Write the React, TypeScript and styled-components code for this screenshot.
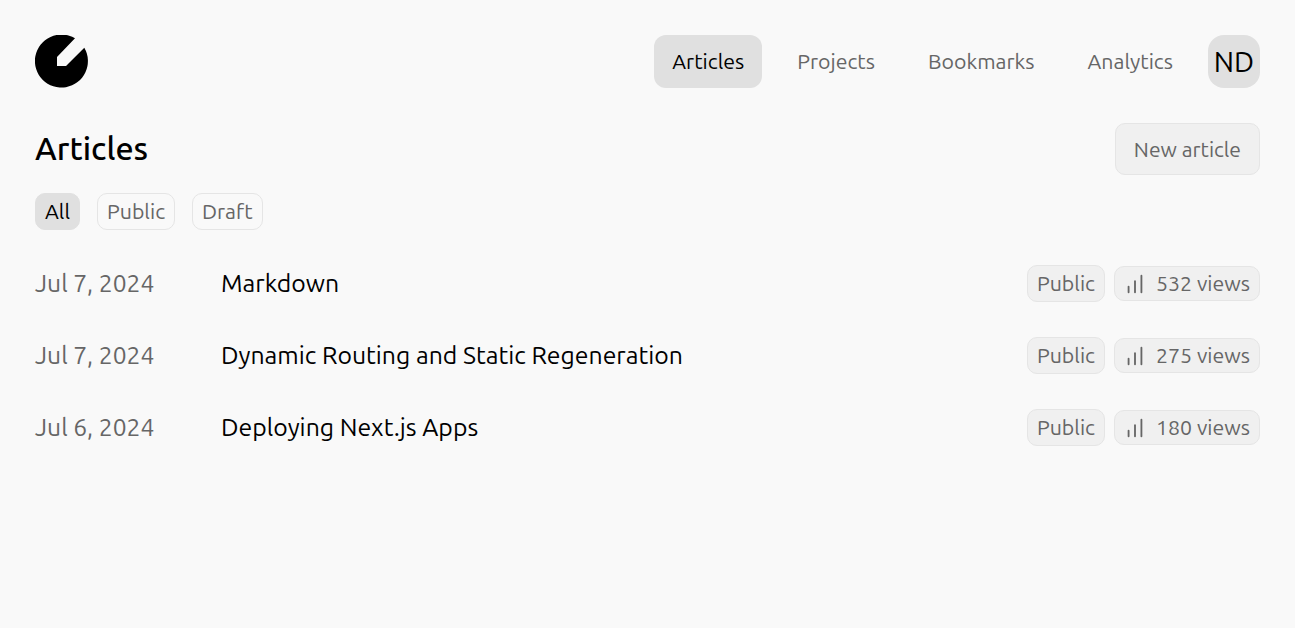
import styled, { createGlobalStyle } from 'styled-components';
import { ChartNoAxesColumnIncreasing } from 'lucide-react';

const GlobalStyle = createGlobalStyle`
  html, body {
    margin: 0;
    background: #f9f9f9;
    color: #000;
    font-family: Ubuntu, "Noto Sans", sans-serif;
  }
  * {
    box-sizing: border-box;
  }
`;

const Page = styled.div`
  padding: 35px;
`;

const Header = styled.header`
  display: flex;
  align-items: center;
  justify-content: space-between;
  height: 53px;
`;

const Nav = styled.nav`
  display: flex;
  align-items: center;
  gap: 17px;
`;

const NavItem = styled.a<{ $active?: boolean }>`
  display: flex;
  align-items: center;
  height: 53px;
  padding: 0 18px 2px;
  border-radius: 12px;
  font-size: 21.3px;
  color: ${(p) => (p.$active ? '#000' : '#666')};
  background: ${(p) => (p.$active ? '#e0e0e0' : 'transparent')};
`;

const Avatar = styled.div`
  display: flex;
  align-items: center;
  justify-content: center;
  width: 52px;
  height: 53px;
  border-radius: 16px;
  background: #e0e0e0;
  font-size: 28.4px;
`;

const TitleRow = styled.div`
  display: flex;
  align-items: center;
  justify-content: space-between;
  margin-top: 35px;
`;

const Title = styled.h1`
  margin: 0;
  padding-bottom: 2px;
  font-size: 32.3px;
  font-weight: 500;
`;

const NewButton = styled.button`
  height: 52px;
  padding: 0 18px;
  border: 1px solid #e5e5e5;
  border-radius: 10px;
  background: #f0f0f0;
  color: #666;
  font-family: inherit;
  font-size: 21.1px;
`;

const Filters = styled.div`
  display: flex;
  gap: 17px;
  margin-top: 18px;
`;

const Filter = styled.span<{ $active?: boolean }>`
  display: flex;
  align-items: center;
  height: 37px;
  padding: 0 9px 2px;
  border-radius: 10px;
  border: 1px solid ${(p) => (p.$active ? '#e0e0e0' : '#e5e5e5')};
  background: ${(p) => (p.$active ? '#e0e0e0' : 'transparent')};
  color: ${(p) => (p.$active ? '#000' : '#666')};
  font-size: 21.3px;
`;

const List = styled.div`
  display: flex;
  flex-direction: column;
  gap: 35px;
  margin-top: 35px;
`;

const Row = styled.div`
  display: flex;
  align-items: center;
  height: 37px;
`;

const DateText = styled.span`
  width: 186px;
  padding-bottom: 2px;
  font-size: 24.6px;
  color: #666;
`;

const RowTitle = styled.span`
  flex: 1;
  padding-bottom: 2px;
  font-size: 24.8px;
`;

const Badges = styled.div`
  display: flex;
  align-items: center;
  gap: 9px;
`;

const Badge = styled.span`
  display: flex;
  align-items: center;
  height: 37px;
  padding: 0 9px 2px;
  border: 1px solid #e5e5e5;
  border-radius: 10px;
  background: #f0f0f0;
  color: #666;
  font-size: 21.3px;
`;

const Views = styled(Badge)`
  height: 35px;
  gap: 10px;

  svg {
    margin-top: 2px;
  }
`;

const rows = [
  { date: 'Jul 7, 2024', title: 'Markdown', views: 532 },
  { date: 'Jul 7, 2024', title: 'Dynamic Routing and Static Regeneration', views: 275 },
  { date: 'Jul 6, 2024', title: 'Deploying Next.js Apps', views: 180 },
];

export default function App() {
  return (
    <Page>
      <GlobalStyle />
      <Header>
        <svg width="53" height="53" viewBox="0 0 53 53">
          <path d="M40 3.3 L22 22 V31 H31 L49.3 12.7 A26.5 26.5 0 1 1 40 3.3 Z" fill="#000" />
        </svg>
        <Nav>
          <NavItem $active>Articles</NavItem>
          <NavItem>Projects</NavItem>
          <NavItem>Bookmarks</NavItem>
          <NavItem>Analytics</NavItem>
          <Avatar>ND</Avatar>
        </Nav>
      </Header>
      <TitleRow>
        <Title>Articles</Title>
        <NewButton>New article</NewButton>
      </TitleRow>
      <Filters>
        <Filter $active>All</Filter>
        <Filter>Public</Filter>
        <Filter>Draft</Filter>
      </Filters>
      <List>
        {rows.map((row) => (
          <Row key={row.title}>
            <DateText>{row.date}</DateText>
            <RowTitle>{row.title}</RowTitle>
            <Badges>
              <Badge>Public</Badge>
              <Views>
                <ChartNoAxesColumnIncreasing size={22} strokeWidth={2} />
                {row.views} views
              </Views>
            </Badges>
          </Row>
        ))}
      </List>
    </Page>
  );
}
